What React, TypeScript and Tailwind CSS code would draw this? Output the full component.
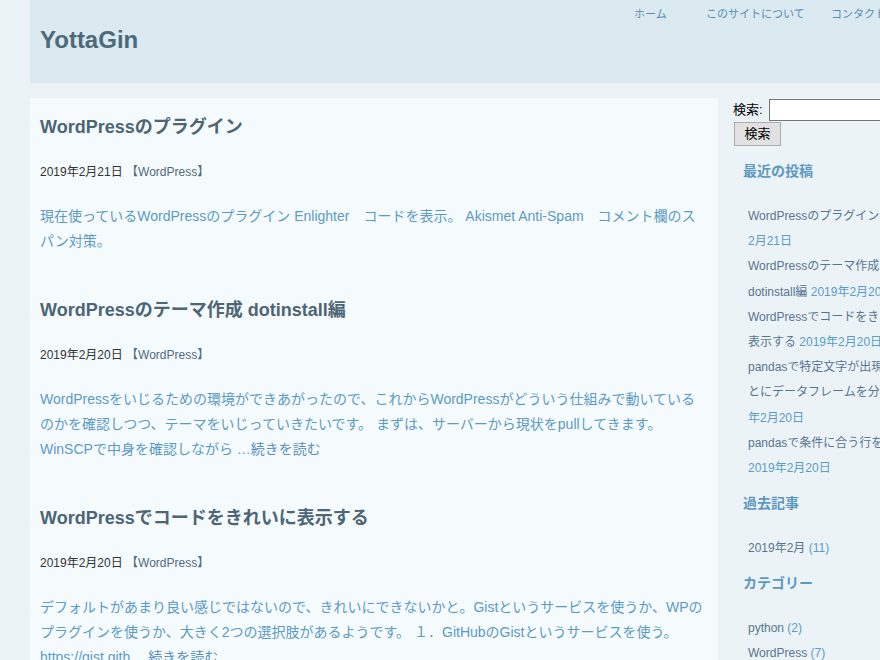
import React from "react";

const posts = [
  {
    title: "WordPressのプラグイン",
    date: "2019年2月21日",
    body: "現在使っているWordPressのプラグイン Enlighter　コードを表示。 Akismet Anti-Spam　コメント欄のスパン対策。",
    more: false,
  },
  {
    title: "WordPressのテーマ作成 dotinstall編",
    date: "2019年2月20日",
    body: "WordPressをいじるための環境ができあがったので、これからWordPressがどういう仕組みで動いているのかを確認しつつ、テーマをいじっていきたいです。 まずは、サーバーから現状をpullしてきます。 WinSCPで中身を確認しながら …",
    more: true,
  },
  {
    title: "WordPressでコードをきれいに表示する",
    date: "2019年2月20日",
    body: "デフォルトがあまり良い感じではないので、きれいにできないかと。Gistというサービスを使うか、WPのプラグインを使うか、大きく2つの選択肢があるようです。 １．GitHubのGistというサービスを使う。 https://gist.gith …",
    more: true,
  },
];

export default function App() {
  return (
    <div className="min-h-screen overflow-hidden bg-[#ecf3f7] font-['Liberation_Sans','Noto_Sans_CJK_JP',sans-serif]">
      <div className="w-[980px] pl-[30px]">

        {/* HEADER */}
        <header className="flex h-[83px] items-start bg-[#dbe9f0]">
          <div className="w-[604px] pl-[10px] pt-[26px]">
            <h1 className="text-[24px] font-bold leading-7 text-[#4c6a7a]">YottaGin</h1>
          </div>
          <nav className="flex pt-[6px] text-[11px] leading-4 text-[#5a8db2]">
            <a className="w-[72px]">ホーム</a>
            <a className="w-[125px]">このサイトについて</a>
            <a>コンタクト</a>
          </nav>
        </header>

        <div className="mt-[15px] flex items-start">

          {/* POSTS */}
          <main className="min-h-[600px] w-[688px] bg-[#f5fafd] px-[10px] pt-[17px]">
            {posts.map((p, i) => (
              <article key={i} className={i > 0 ? "mt-[44px]" : ""}>
                <h2 className="text-[18px] font-bold leading-6 text-[#4d6574]">{p.title}</h2>
                <p className="mt-[23px] text-[12px] leading-5 text-[#333]">
                  {p.date} <span className="text-[#4f6a7e]">【WordPress】</span>
                </p>
                <p className="mt-[22px] text-[14px] leading-[25px] text-[#5b9bc5]">
                  {p.body}
                  {p.more && <a className="text-[#5790b8]">続きを読む</a>}
                </p>
              </article>
            ))}
          </main>

          {/* SIDEBAR */}
          <aside className="w-[260px] whitespace-nowrap pl-[15px] pt-px">
            <form className="flex flex-col items-start">
              <div className="flex items-center">
                <label className="text-[13px] leading-5 text-black">検索:</label>
                <input className="ml-[6px] h-[22px] w-[200px] border border-[#767676] bg-white" />
              </div>
              <button className="ml-px mt-px h-[24px] w-[47px] border border-[#adadad] bg-[#e1e1e1] text-[13px] text-black">
                検索
              </button>
            </form>

            <h3 className="mt-[15px] pl-[10px] text-[14px] font-bold leading-5 text-[#5b98bf]">最近の投稿</h3>
            <ul className="mt-[23px] pl-[15px] text-[12px] leading-[25.2px] text-[#587590]">
              <li>
                WordPressのプラグイン <span className="text-[#5b9bc5]">2019年<br />2月21日</span>
              </li>
              <li>
                WordPressのテーマ作成<br />dotinstall編 <span className="text-[#5b9bc5]">2019年2月20日</span>
              </li>
              <li>
                WordPressでコードをきれいに<br />表示する <span className="text-[#5b9bc5]">2019年2月20日</span>
              </li>
              <li>
                pandasで特定文字が出現するご<br />とにデータフレームを分割する 2019<br />
                <span className="text-[#5b9bc5]">年2月20日</span>
              </li>
              <li>
                pandasで条件に合う行を抽出する<br />
                <span className="text-[#5b9bc5]">2019年2月20日</span>
              </li>
            </ul>

            <h3 className="mt-[12px] pl-[10px] text-[14px] font-bold leading-5 text-[#5b98bf]">過去記事</h3>
            <ul className="mt-[23px] pl-[15px] text-[12px] leading-[25px] text-[#5b9bc5]">
              <li>
                <a className="text-[#587590]">2019年2月</a> (11)
              </li>
            </ul>

            <h3 className="mt-[12px] pl-[10px] text-[14px] font-bold leading-5 text-[#5b98bf]">カテゴリー</h3>
            <ul className="mt-[23px] pl-[15px] text-[12px] leading-[25px] text-[#5b9bc5]">
              <li>
                <a className="text-[#587590]">python</a> (2)
              </li>
              <li>
                <a className="text-[#587590]">WordPress</a> (7)
              </li>
            </ul>
          </aside>
        </div>
      </div>
    </div>
  );
}
